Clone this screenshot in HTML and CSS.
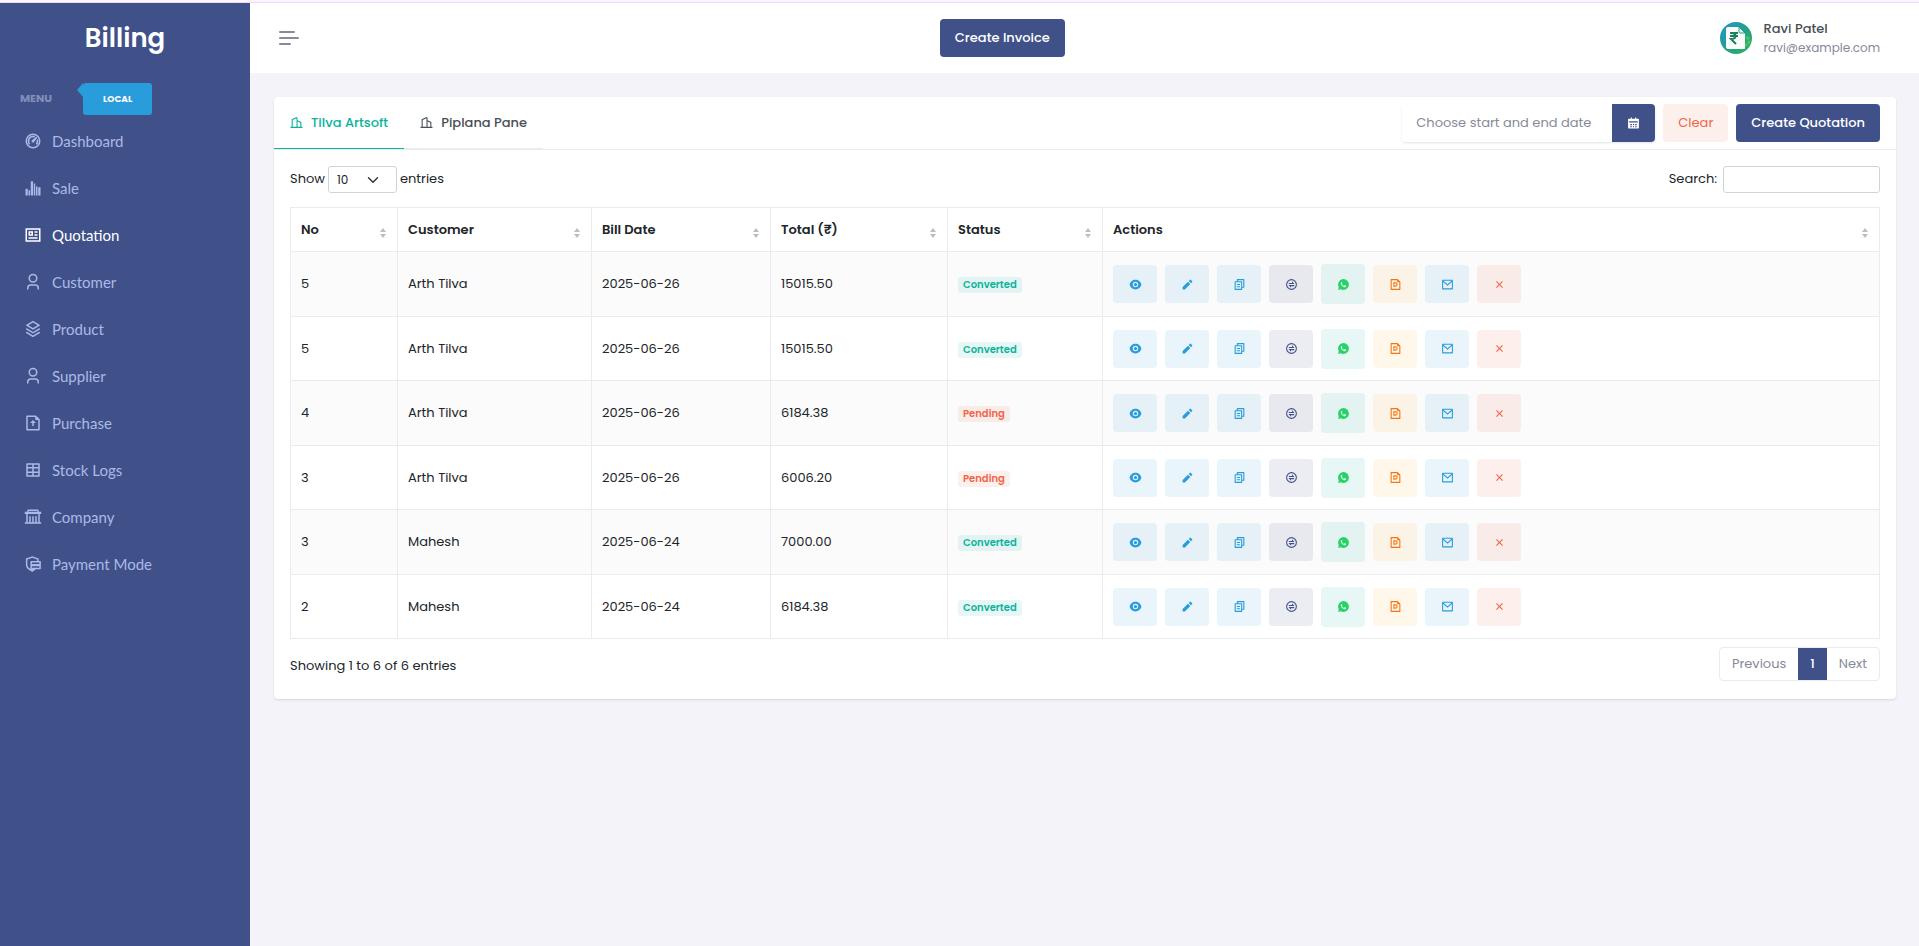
FILE: index.html
```html
<!DOCTYPE html>
<html lang="en">
<head>
    <meta charset="UTF-8">
    <meta name="viewport" content="width=device-width, initial-scale=1.0">
    <title>Billing - Quotation</title>
    <link rel="stylesheet" href="styles.css">
</head>
<body>

    <!-- icon set -->
    <svg class="icon-set" aria-hidden="true">
        <symbol id="i-dashboard" viewBox="0 0 24 24"><path d="M12 2a10 10 0 1 1 0 20 10 10 0 0 1 0-20zm0 2a8 8 0 1 0 0 16 8 8 0 0 0 0-16zm0 1c1 0 2 .2 2.900.7L13.300 7.200A5 5 0 0 0 8.460 15.540L7.050 16.950A7 7 0 0 1 12 5zm6.400 4.200a7 7 0 0 1-1.450 7.750l-1.410-1.410a5 5 0 0 0 1.300-4.800zm-2.200-2.800 1.500 1.400-3.800 4.900a2 2 0 1 1-2.500-2.500z"/></symbol>
        <symbol id="i-bars" viewBox="0 0 24 24"><path d="M2 13h3v9H2zM6 15h2v7H6zM9 3h3v19H9zM13 6h2v16h-2zM16 10h2v12h-2zM19 11h3v11h-3z"/></symbol>
        <symbol id="i-article" viewBox="0 0 24 24"><path d="M2 3h20v18H2zm2 2v14h16V5zm2 2h6v6H6zm2 2v2h2V9zm-2 6h12v2H6zm8-8h4v2h-4zm0 4h4v2h-4z"/></symbol>
        <symbol id="i-user" viewBox="0 0 24 24"><path d="M20 22h-2v-2a3 3 0 0 0-3-3H9a3 3 0 0 0-3 3v2H4v-2a5 5 0 0 1 5-5h6a5 5 0 0 1 5 5v2zm-8-9a6 6 0 1 1 0-12 6 6 0 0 1 0 12zm0-2a4 4 0 1 0 0-8 4 4 0 0 0 0 8z"/></symbol>
        <symbol id="i-stack" viewBox="0 0 24 24"><path d="M20.080 15.700l1.200.720a.5.500 0 0 1 0 .860l-8.770 5.260a1 1 0 0 1-1.030 0l-8.760-5.260a.5.500 0 0 1 0-.860l1.200-.720L12 20.550l8.080-4.850zm0-4.700l1.200.720a.5.500 0 0 1 0 .860L12 18.150l-9.280-5.570a.5.500 0 0 1 0-.860l1.200-.720L12 15.850 20.080 11zm-7.570-9.690l8.770 5.260a.5.500 0 0 1 0 .860L12 13 2.720 7.430a.5.500 0 0 1 0-.860l8.770-5.260a1 1 0 0 1 1.020 0zM12 3.330L5.890 7 12 10.670 18.110 7 12 3.330z"/></symbol>
        <symbol id="i-upload" viewBox="0 0 24 24"><path d="M15 4H5v16h14V8h-4V4zM3 2.990C3 2.440 3.450 2 4 2h12l5 5v13.990a1 1 0 0 1-1 1.010H4a1 1 0 0 1-1-.990V2.990zM13 12v4h-2v-4H8l4-4 4 4h-3z"/></symbol>
        <symbol id="i-table" viewBox="0 0 24 24"><path d="M4 3h16a1 1 0 0 1 1 1v16a1 1 0 0 1-1 1H4a1 1 0 0 1-1-1V4a1 1 0 0 1 1-1zm7 2H5v3h6zm2 0v3h6V5zm-2 5H5v4h6zm2 0v4h6v-4zm-2 6H5v3h6zm2 0v3h6v-3z"/></symbol>
        <symbol id="i-bank" viewBox="0 0 24 24"><path d="M5 2h14l1 3h3v3h-2v11h2v2H1v-2h2V8H1V5h3zm1 2v1h12V4zM5 8v11h2v-8h2v8h2v-8h2v8h2v-8h2v8h2V8z"/></symbol>
        <symbol id="i-pay" viewBox="0 0 24 24"><path d="M11 1.500l8.500 3.200V8h2a1 1 0 0 1 1 1v9a1 1 0 0 1-1 1h-5.500L11 22.500l-6-4A7 7 0 0 1 2.500 13V4.700zm0 2.200L4.500 6v7a5 5 0 0 0 2 4L9 18.600a1 1 0 0 1-.5-.8V9a1 1 0 0 1 1-1h8V6zM10.500 10v2h10v-2zm0 5v2h10v-2z"/></symbol>
        <symbol id="i-building" viewBox="0 0 24 24"><path d="M21 20h2v2H1v-2h2V6l9-4 2 1v5l7 3zM19 20v-7.700l-5-2.100V20zM12 20V4.200L5 7.300V20z"/></symbol>
        <symbol id="i-calendar" viewBox="0 0 24 24"><path d="M17 3h4a1 1 0 0 1 1 1v16a1 1 0 0 1-1 1H3a1 1 0 0 1-1-1V4a1 1 0 0 1 1-1h4V1h2v2h6V1h2zM4 8v2h16V8zm2 5v2h3v-2zm5 0v2h2v-2zm4 0v2h3v-2zm-9 4v2h3v-2zm5 0v2h2v-2zm4 0v2h3v-2z"/></symbol>
        <symbol id="i-eye" viewBox="0 0 24 24"><path d="M1.180 12C2.120 6.880 6.610 3 12 3s9.880 3.880 10.820 9c-.940 5.120-5.430 9-10.820 9s-9.880-3.880-10.820-9zM12 17a5 5 0 1 0 0-10 5 5 0 0 0 0 10zm0-2a3 3 0 1 1 0-6 3 3 0 0 1 0 6z"/></symbol>
        <symbol id="i-pencil" viewBox="0 0 24 24"><path d="M12.900 6.860l4.240 4.240L7.240 21H3v-4.240l9.900-9.900zm1.410-1.420l2.120-2.120a1 1 0 0 1 1.420 0l2.830 2.830a1 1 0 0 1 0 1.420l-2.120 2.120-4.250-4.250z"/></symbol>
        <symbol id="i-copy" viewBox="0 0 24 24"><path d="M7 6V3a1 1 0 0 1 1-1h12a1 1 0 0 1 1 1v14a1 1 0 0 1-1 1h-3v3a1 1 0 0 1-1 1H4a1 1 0 0 1-1-1V7a1 1 0 0 1 1-1h3zM5 8v12h10V8H5zm4-2h8v10h2V4H9v2zm-2 5h6v2H7v-2zm0 4h6v2H7v-2z"/></symbol>
        <symbol id="i-exchange" viewBox="0 0 24 24"><path d="M12 22a10 10 0 1 1 0-20 10 10 0 0 1 0 20zm0-2a8 8 0 1 0 0-16 8 8 0 0 0 0 16zM7 9h6V6l4.500 5H7V9zm10 6h-6v3l-4.500-5H17v2z"/></symbol>
        <symbol id="i-whatsapp" viewBox="0 0 24 24"><path d="M2 22l1.350-4.970A9.950 9.950 0 0 1 2 12 10 10 0 1 1 12 22a9.950 9.950 0 0 1-5.030-1.350L2 22zM8.400 7.300c-.4 0-1.400.7-1.400 2.300 0 4 4.500 7.400 7.200 7.400 1.600 0 2.600-1 2.700-2.300 0-.4-.1-.5-.3-.6l-2.200-1c-.4-.1-.6 0-.8.300l-.6.800c-.2.200-.4.200-.6.100-1.400-.6-2.500-1.500-3.200-2.800-.1-.2 0-.4.100-.5l.5-.7c.1-.2.200-.4.100-.6L9 7.600c-.1-.2-.3-.3-.6-.3z"/></symbol>
        <symbol id="i-pdf" viewBox="0 0 24 24"><path d="M3 2h13l5 5v15H3V2zM5 4v16h14V8h-4V4H5zM8 8h4a4 4 0 0 1 0 8H8V8zM10 10v4h2a2 2 0 0 0 0-4h-2z"/></symbol>
        <symbol id="i-mail" viewBox="0 0 24 24"><path d="M3 3h18a1 1 0 0 1 1 1v16a1 1 0 0 1-1 1H3a1 1 0 0 1-1-1V4a1 1 0 0 1 1-1zm17 4.240l-7.930 7.100L4 7.220V19h16V7.240zM4.510 5l7.550 6.660L19.500 5H4.510z"/></symbol>
        <symbol id="i-close" viewBox="0 0 24 24"><path d="M12 10.590l4.950-4.950 1.410 1.410L13.410 12l4.950 4.950-1.410 1.410L12 13.410l-4.950 4.950-1.410-1.410L10.590 12 5.640 7.050l1.410-1.410z"/></symbol>
    </svg>

    <div class="layout">

        <aside class="sidebar">
            <a href="#" class="brand">Billing</a>
            <div class="menu-title">
                <span>MENU</span>
                <span class="env-tag">LOCAL</span>
            </div>
            <nav>
                <ul>
                    <li><a href="#"><svg><use href="#i-dashboard"/></svg>Dashboard</a></li>
                    <li><a href="#"><svg><use href="#i-bars"/></svg>Sale</a></li>
                    <li><a href="#" class="active"><svg><use href="#i-article"/></svg>Quotation</a></li>
                    <li><a href="#"><svg><use href="#i-user"/></svg>Customer</a></li>
                    <li><a href="#"><svg><use href="#i-stack"/></svg>Product</a></li>
                    <li><a href="#"><svg><use href="#i-user"/></svg>Supplier</a></li>
                    <li><a href="#"><svg><use href="#i-upload"/></svg>Purchase</a></li>
                    <li><a href="#"><svg><use href="#i-table"/></svg>Stock Logs</a></li>
                    <li><a href="#"><svg><use href="#i-bank"/></svg>Company</a></li>
                    <li><a href="#"><svg><use href="#i-pay"/></svg>Payment Mode</a></li>
                </ul>
            </nav>
        </aside>

        <div class="main">

            <header class="topbar">
                <button type="button" class="hamburger" aria-label="Toggle menu">
                    <span></span>
                    <span></span>
                    <span></span>
                </button>
                <button type="button" class="btn btn-primary">Create Invoice</button>
                <div class="user">
                    <svg class="avatar" viewBox="0 0 32 32">
                        <defs>
                            <linearGradient id="avatar-bg" x1="0" y1="0" x2="1" y2="1">
                                <stop offset="0" stop-color="#2193d6"/>
                                <stop offset="0.5" stop-color="#22a08a"/>
                                <stop offset="1" stop-color="#2fb457"/>
                            </linearGradient>
                        </defs>
                        <circle cx="16" cy="16" r="16" fill="url(#avatar-bg)"/>
                        <circle cx="25" cy="19" r="4" fill="none" stroke="#4cc764" stroke-width="3" stroke-dasharray="3 1"/>
                        <path d="M8 5h11l6 6v15a1 1 0 0 1-1 1H8a2 2 0 0 1-2-2V7a2 2 0 0 1 2-2z" fill="#fafafa"/>
                        <path d="M19 5v5a1 1 0 0 0 1 1h5z" fill="#e8f5f1" stroke="#22a08a"/>
                        <path d="M10 11h8M10 14h8M11 11c6 0 6 6 0 6l5 5" fill="none" stroke="#1b7f60" stroke-width="2"/>
                    </svg>
                    <div>
                        <div class="user-name">Ravi Patel</div>
                        <div class="user-mail">ravi@example.com</div>
                    </div>
                </div>
            </header>

            <main class="content">
                <div class="card">

                    <div class="card-header">
                        <ul class="tabs">
                            <li><a href="#" class="active"><svg><use href="#i-building"/></svg>Tilva Artsoft</a></li>
                            <li><a href="#"><svg><use href="#i-building"/></svg>Piplana Pane</a></li>
                        </ul>
                        <div class="tools">
                            <div class="date-group">
                                <input type="text" aria-label="Date range" placeholder="Choose start and end date">
                                <button type="button" aria-label="Open calendar"><svg><use href="#i-calendar"/></svg></button>
                            </div>
                            <button type="button" class="btn btn-clear">Clear</button>
                            <button type="button" class="btn btn-primary">Create Quotation</button>
                        </div>
                    </div>

                    <div class="card-body">
                        <div class="table-top">
                            <div class="field">
                                <label for="length">Show</label>
                                <select id="length">
                                    <option>10</option>
                                    <option>25</option>
                                    <option>50</option>
                                    <option>100</option>
                                </select>
                                <label for="length">entries</label>
                            </div>
                            <div class="field search">
                                <label for="search">Search:</label>
                                <input type="search" id="search">
                            </div>
                        </div>

                        <table>
                            <thead>
                                <tr>
                                    <th class="col-no">No</th>
                                    <th class="col-customer">Customer</th>
                                    <th class="col-date">Bill Date</th>
                                    <th class="col-total">Total (₹)</th>
                                    <th class="col-status">Status</th>
                                    <th>Actions</th>
                                </tr>
                            </thead>
                            <tbody id="quotations"></tbody>
                        </table>

                        <div class="table-bottom">
                            <p>Showing 1 to 6 of 6 entries</p>
                            <div class="pagination">
                                <a href="#">Previous</a>
                                <a href="#" class="active">1</a>
                                <a href="#">Next</a>
                            </div>
                        </div>
                    </div>

                </div>
            </main>

        </div>
    </div>

    <script>
        const quotations = [
            [5, 'Arth Tilva', '2025-06-26', '15015.50', 'Converted'],
            [5, 'Arth Tilva', '2025-06-26', '15015.50', 'Converted'],
            [4, 'Arth Tilva', '2025-06-26', '6184.38', 'Pending'],
            [3, 'Arth Tilva', '2025-06-26', '6006.20', 'Pending'],
            [3, 'Mahesh', '2025-06-24', '7000.00', 'Converted'],
            [2, 'Mahesh', '2025-06-24', '6184.38', 'Converted']
        ];

        // icon, colour class, label
        const actions = [
            ['eye', 'info', 'View'],
            ['pencil', 'info', 'Edit'],
            ['copy', 'info', 'Duplicate'],
            ['exchange', 'primary', 'Convert'],
            ['whatsapp', 'success', 'WhatsApp'],
            ['pdf', 'warning', 'PDF'],
            ['mail', 'info', 'Mail'],
            ['close', 'danger', 'Delete']
        ];

        const buttons = actions.map(([icon, color, label]) =>
            `<button type="button" class="action ${color}" aria-label="${label}"><svg><use href="#i-${icon}"/></svg></button>`
        ).join('');

        document.getElementById('quotations').innerHTML = quotations.map(([no, customer, date, total, status]) => `
            <tr>
                <td>${no}</td>
                <td>${customer}</td>
                <td>${date}</td>
                <td>${total}</td>
                <td><span class="badge ${status.toLowerCase()}">${status}</span></td>
                <td><div class="actions">${buttons}</div></td>
            </tr>`).join('');
    </script>

</body>
</html>
```

FILE: styles.css
```css
* {
    box-sizing: border-box;
}
body {
    margin: 0;
    border-top: 2px solid #fcf5fd;
    background-color: #f3f3f9;
    color: #212529;
    font-family: Poppins, Inter, sans-serif;
    font-size: 13px;
    line-height: 20px;
}
a {
    color: inherit;
    text-decoration: none;
}
ul {
    list-style: none;
    margin: 0;
    padding: 0;
}
button, input, select {
    font: inherit;
    color: inherit;
}
button {
    cursor: pointer;
}
svg {
    fill: currentColor;
    flex: none;
}
.icon-set {
    display: none;
}
.layout {
    display: flex;
    min-height: calc(100vh - 2px);
    border-top: 1px solid #e9dcf0;
}

/* sidebar */
.sidebar {
    width: 250px;
    flex: none;
    background-color: #405189;
    color: #abb9e8;
}
.brand {
    display: block;
    height: 70px;
    line-height: 70px;
    text-align: center;
    font-size: 26px;
    font-weight: 600;
    color: white;
}
.menu-title {
    display: flex;
    align-items: flex-start;
    gap: 31px;
    padding: 10px 20px 0;
    font-size: 11px;
    font-weight: 700;
    line-height: 30px;
    color: #838fb9;
}
.env-tag {
    position: relative;
    padding: 6px 20px;
    border-radius: 3px;
    background-color: #299cdb;
    color: white;
    font-size: 9px;
    line-height: 20px;
}
.env-tag::before {
    content: "";
    position: absolute;
    left: -6px;
    top: 0;
    border: 7px solid transparent;
    border-left: 0;
    border-right: 6px solid #299cdb;
}
.sidebar nav {
    padding-top: 2px;
}
.sidebar li a {
    display: flex;
    align-items: center;
    gap: 10px;
    height: 47px;
    padding: 0 24px;
    font-family: "HK Grotesk", Lato, sans-serif;
    font-size: 15px;
}
.sidebar li svg {
    width: 18px;
    height: 18px;
}
.sidebar li .active {
    color: white;
}

/* topbar */
.main {
    flex: 1;
    min-width: 0;
}
.topbar {
    display: flex;
    align-items: center;
    justify-content: space-between;
    height: 70px;
    padding: 0 23px 0 29px;
    background-color: white;
}
.hamburger {
    display: flex;
    flex-direction: column;
    gap: 4px;
    width: 22px;
    padding: 0;
    border: 0;
    background: none;
}
.hamburger span {
    width: 16px;
    height: 2px;
    border-radius: 1px;
    background-color: #878a99;
}
.hamburger span:nth-child(2) {
    width: 20px;
}
.hamburger span:nth-child(3) {
    width: 12px;
}
.user {
    display: flex;
    align-items: center;
    gap: 12px;
    padding: 0 16px;
}
.avatar {
    width: 32px;
    height: 32px;
}
.user-name {
    font-weight: 500;
    color: #495057;
}
.user-mail {
    font-size: 12px;
    line-height: 18px;
    color: #878a99;
}
.btn {
    height: 38px;
    padding: 0 15px;
    border: 0;
    border-radius: 4px;
}
.btn-primary {
    background-color: #405189;
    color: white;
    font-weight: 500;
}
.btn-clear {
    background-color: #fdefec;
    color: #f06548;
}

/* card */
.content {
    padding: 24px 23px 24px 24px;
}
.card {
    border-radius: 4px;
    background-color: white;
    box-shadow: 0 1px 2px rgba(56, 65, 74, 0.15);
}
.card-header {
    display: flex;
    justify-content: space-between;
    border-bottom: 1px solid #e9ebec;
}
.tabs {
    display: flex;
}
.tabs a {
    display: flex;
    align-items: center;
    gap: 8px;
    height: 52px;
    padding: 0 16px;
    border-bottom: 1px solid #e9ebec;
    color: #495057;
    font-weight: 500;
}
.tabs .active {
    color: #0ab39c;
    border-color: #0ab39c;
}
.tabs svg {
    width: 13px;
    height: 13px;
}
.tools {
    display: flex;
    align-items: center;
    gap: 8px;
    padding-right: 16px;
}
.date-group {
    display: flex;
    border-radius: 4px;
    box-shadow: 0 1px 2px rgba(56, 65, 74, 0.15);
}
.date-group input {
    width: 210px;
    height: 38px;
    padding: 0 14px;
    border: 0;
    border-radius: 4px 0 0 4px;
}
.date-group input::placeholder {
    color: #878a99;
}
.date-group button {
    display: flex;
    align-items: center;
    justify-content: center;
    width: 43px;
    padding: 0;
    border: 0;
    border-radius: 0 4px 4px 0;
    background-color: #405189;
    color: white;
}
.date-group svg {
    width: 13px;
    height: 13px;
}
.card-body {
    padding: 16px;
}
.table-top, .table-bottom {
    display: flex;
    justify-content: space-between;
}
.table-top {
    margin-bottom: 14px;
}
.field {
    display: flex;
    align-items: flex-start;
    gap: 3px;
}
.field label {
    line-height: 25px;
}
.field select, .field input {
    height: 27px;
    border: 1px solid #ced4da;
    border-radius: 3px;
    background-color: white;
}
.field select {
    width: 69px;
    padding: 0 8px;
    appearance: none;
    background: url("data:image/svg+xml,%3Csvg xmlns='http://www.w3.org/2000/svg' viewBox='0 0 16 16'%3E%3Cpath fill='none' stroke='%23343a40' stroke-linecap='round' stroke-linejoin='round' stroke-width='2' d='M2 5l6 6 6-6'/%3E%3C/svg%3E") no-repeat right 17px center / 12px;
    font-size: 12px;
}
.field input {
    width: 157px;
    padding: 0 8px;
}
.search {
    gap: 6px;
}

/* table */
table {
    width: 100%;
    border-collapse: collapse;
}
th, td {
    height: 44px;
    padding: 0 10px;
    border: 1px solid #e9ebec;
    text-align: left;
}
td {
    height: 65px;
}
tr:nth-child(even) td {
    height: 64px;
}
th {
    position: relative;
    font-weight: 600;
}
th::before, th::after {
    content: "";
    position: absolute;
    right: 11px;
    border: 3px solid transparent;
}
th::before {
    top: 20px;
    border-top: 0;
    border-bottom: 4px solid #bcbdbe;
}
th::after {
    top: 26px;
    border-bottom: 0;
    border-top: 4px solid #bcbdbe;
}
tbody tr:nth-child(odd) {
    background-color: #fbfbfb;
}
.col-no {
    width: 107px;
}
.col-customer {
    width: 194px;
}
.col-date {
    width: 179px;
}
.col-total {
    width: 177px;
}
.col-status {
    width: 155px;
}
.badge {
    display: inline-block;
    padding: 0 5px;
    border-radius: 3px;
    font-size: 10px;
    font-weight: 600;
    line-height: 16px;
}
.converted {
    background-color: rgba(10, 179, 156, 0.1);
    color: #0ab39c;
}
.pending {
    background-color: rgba(240, 101, 72, 0.1);
    color: #f06548;
}
.actions {
    display: flex;
    align-items: center;
    gap: 8px;
}
.action {
    display: flex;
    align-items: center;
    justify-content: center;
    width: 44px;
    height: 38px;
    padding: 0;
    border: 0;
    border-radius: 4px;
}
.action svg {
    width: 13px;
    height: 13px;
}
.info {
    background-color: rgba(41, 156, 219, 0.1);
    color: #299cdb;
}
.primary {
    background-color: rgba(64, 81, 137, 0.1);
    color: #405189;
}
.success {
    height: 40px;
    background-color: rgba(10, 179, 156, 0.1);
    color: #25d366;
}
.warning {
    background-color: rgba(255, 183, 50, 0.1);
    color: #f57414;
}
.danger {
    background-color: rgba(240, 101, 72, 0.1);
    color: #f06548;
}

/* table footer */
.table-bottom {
    padding: 8px 0 2px;
}
.table-bottom p {
    margin: 9px 0 0;
}
.pagination {
    display: flex;
    overflow: hidden;
    border: 1px solid #e9ebec;
    border-radius: 4px;
    color: #878a99;
}
.pagination a {
    padding: 6px 12px;
}
.pagination .active {
    background-color: #405189;
    color: white;
    font-weight: 500;
}
```
